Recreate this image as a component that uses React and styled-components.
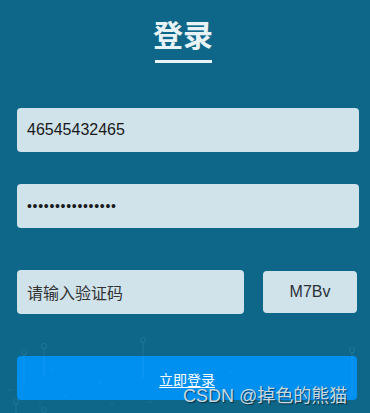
import React from "react";
import styled, { createGlobalStyle } from "styled-components";

const Global = createGlobalStyle`
  html, body { margin: 0; padding: 0; background: #0e6688; }
  body { font-family: "Liberation Sans", "Noto Sans CJK SC", Arial, sans-serif; }
  * { box-sizing: border-box; }
`;

const Page = styled.div`
  position: relative;
  width: 370px;
  height: 413px;
  overflow: hidden;
  background: #0e6688;
  padding: 0 11px 0 17px;
`;

const Header = styled.div`
  display: flex;
  flex-direction: column;
  align-items: center;
  padding-top: 13px;
  padding-right: 10px;
`;

const Title = styled.h1`
  margin: 0;
  font-family: "Noto Sans CJK SC", sans-serif;
  font-weight: 700;
  font-size: 30px;
  line-height: 41px;
  letter-spacing: 0px;
  color: #e8f3f8;
`;

const Bar = styled.div`
  width: 57px;
  height: 3px;
  margin-top: 6px;
  background: #e8f3f8;
`;

const Form = styled.div`
  display: flex;
  flex-direction: column;
  margin-top: 45px;
`;

const Field = styled.div`
  height: 44px;
  width: ${(p) => p.$w || "342px"};
  margin-top: ${(p) => p.$mt || "0px"};
  background: #d0e2ea;
  border-radius: 4px;
  display: flex;
  align-items: center;
  padding-left: 10px;
  font-size: 16px;
  color: ${(p) => (p.$placeholder ? "#333" : "#1a1a1a")};
  font-family: "Liberation Sans", "Noto Sans CJK SC", sans-serif;
`;

const Dots = styled.span`
  font-size: 14px;
  letter-spacing: 0.7px;
  color: #1a1a1a;
`;

const Row = styled.div`
  display: flex;
  align-items: center;
  gap: 19px;
  margin-top: 42px;
`;

const Code = styled.div`
  width: 94px;
  height: 42px;
  border-radius: 4px;
  background: #d0e2ea;
  display: flex;
  align-items: center;
  justify-content: center;
  font-size: 16px;
  color: #2a3238;
`;

const Button = styled.div`
  margin-top: 42px;
  width: 340px;
  height: 44px;
  border-radius: 4px;
  background: #0090f0;
  display: flex;
  align-items: center;
  justify-content: center;
  padding-top: 2px;
  color: #fff;
  font-size: 14px;
  font-family: "Noto Sans CJK SC", sans-serif;
  text-decoration: underline;
  text-underline-offset: 2px;
`;

const Deco = styled.svg`
  position: absolute;
  left: 0;
  top: 330px;
  pointer-events: none;
`;

const Watermark = styled.div`
  position: absolute;
  left: 183px;
  top: 381px;
  font-size: 18px;
  color: #c9d9e2;
  font-family: "Liberation Sans", "Noto Sans CJK SC", sans-serif;
  text-shadow: 1px 1px 1px rgba(0, 0, 0, 0.55);
  pointer-events: none;
  white-space: nowrap;
`;

const lines = [
  { x: 24, y1: 22, y2: 52 },
  { x: 44, y1: 16, y2: 46 },
  { x: 143, y1: 10, y2: 48 },
  { x: 352, y1: 20, y2: 66 },
];
const dots = [
  [53, 40], [72, 45], [100, 52], [122, 62], [160, 38], [176, 56], [200, 50],
  [88, 70], [112, 74], [66, 66], [40, 72], [230, 42], [10, 60], [150, 72],
];

export default function App() {
  return (
    <>
      <Global />
      <Page>
        <Header>
          <Title>登录</Title>
          <Bar />
        </Header>
        <Form>
          <Field>46545432465</Field>
          <Field $mt="32px">
            <Dots>••••••••••••••••</Dots>
          </Field>
          <Row>
            <Field $w="227px" $placeholder>请输入验证码</Field>
            <Code>M7Bv</Code>
          </Row>
          <Button>立即登录</Button>
        </Form>
        <Deco width="370" height="83" viewBox="0 0 370 83">
          {lines.map((l, i) => (
            <g key={i} stroke="rgba(120,200,255,0.13)" fill="none" strokeWidth="1.2">
              <circle cx={l.x} cy={l.y1} r="2.5" />
              <line x1={l.x} y1={l.y1 + 2.5} x2={l.x} y2={l.y2} />
            </g>
          ))}
          <g stroke="rgba(120,200,255,0.12)" fill="none" strokeWidth="1.2">
            <circle cx="16" cy="72" r="2.5" />
            <line x1="16" y1="74" x2="16" y2="83" />
            <circle cx="44" cy="80" r="2.5" />
          </g>
          {dots.map(([x, y], i) => (
            <circle key={i} cx={x} cy={y} r="1" fill="rgba(120,200,255,0.12)" />
          ))}
        </Deco>
        <Watermark>CSDN @掉色的熊猫</Watermark>
      </Page>
    </>
  );
}
